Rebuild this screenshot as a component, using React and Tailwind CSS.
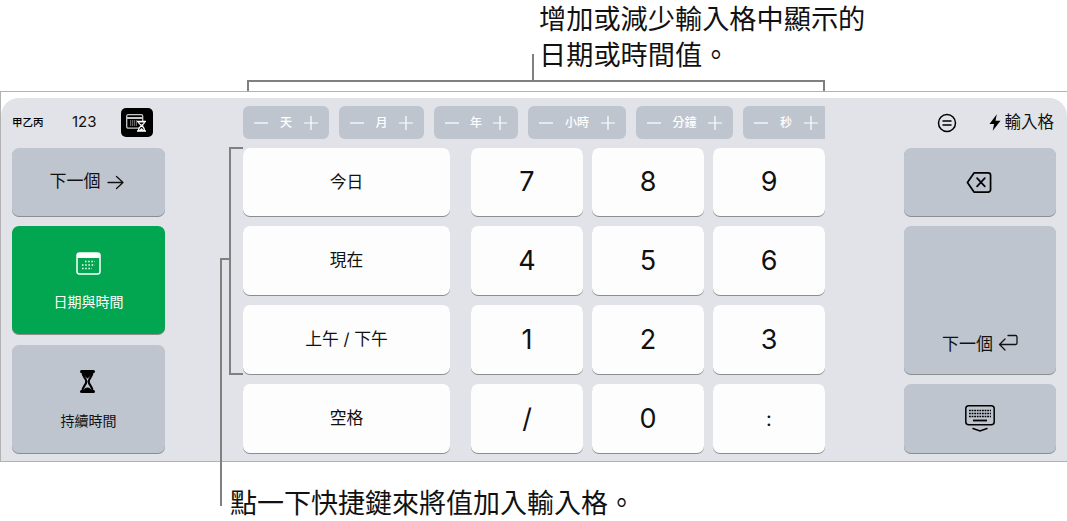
import React from 'react';

const font = { fontFamily: '"Inter", "Noto Sans CJK TC", sans-serif' };

const grayKey = 'flex items-center justify-center rounded-[7px] bg-[#bfc5cf] shadow-[0_1px_0_#8b8d91] text-[#111]';
const whiteKey = 'flex items-center justify-center rounded-[7px] bg-[#fdfdfe] shadow-[0_1px_0_#8b8d91] text-[#111]';

const stepperKeys = [
    { label: '天', width: 'w-[86px]' },
    { label: '月', width: 'w-[85px]' },
    { label: '年', width: 'w-[84px]' },
    { label: '小時', width: 'w-[98px]' },
    { label: '分鐘', width: 'w-[97px]' },
    { label: '秒', width: 'w-[86px]' },
];

const shortcuts = ['今日', '現在', '上午 / 下午', '空格'];
const digits = ['7', '8', '9', '4', '5', '6', '1', '2', '3', '/', '0', ':'];

const Stepper = ({ label, width }) => (
    <div className={`${width} shrink-0 h-[33px] rounded-[6px] bg-[#bfc5cf] flex items-center justify-between px-[11px] text-white`}>
        <svg width="14" height="14" viewBox="0 0 14 14"><path d="M0 7h14" stroke="#fff" strokeWidth="1.200" /></svg>
        <span className="text-[12px] font-medium leading-none">{label}</span>
        <svg width="14" height="14" viewBox="0 0 14 14"><path d="M0 7h14M7 0v14" stroke="#fff" strokeWidth="1.200" /></svg>
    </div>
);

const ModeIcon = () => (
    <svg width="22" height="18" viewBox="0 0 22 18" fill="none">
        <rect x="0.700" y="0.700" width="16" height="13.500" rx="1.500" stroke="#c9c9c9" strokeWidth="1.300" />
        <path d="M1 4h15.500" stroke="#c9c9c9" strokeWidth="2" />
        <path d="M4 7h7M4 9h7M4 11h7" stroke="#c9c9c9" strokeWidth="1.200" strokeDasharray="1.200 0.800" />
        <path d="M11 7.500h9M11 17h9" stroke="#fff" strokeWidth="1.600" />
        <path d="M12.500 8c0 3 6 3.500 6 8.500h-6c0-5 6-5.500 6-8.500z" fill="#000" stroke="#fff" strokeWidth="1.200" />
        <path d="M13.500 16l2-2 2 2z" fill="#fff" />
    </svg>
);

const CalendarIcon = () => (
    <svg width="25" height="23" viewBox="0 0 25 23" fill="none">
        <rect x="1" y="1" width="23" height="21" rx="2.500" stroke="#fff" strokeWidth="1.500" />
        <path d="M1 3.500a2.500 2.500 0 0 1 2.500-2.500h18a2.500 2.500 0 0 1 2.500 2.500v2.500h-23z" fill="#fff" />
        <path d="M9 9.500h10M6 13h13M6 16.500h10" stroke="#fff" strokeWidth="1.500" strokeDasharray="1.500 1.700" />
    </svg>
);

const HourglassIcon = () => (
    <svg width="15" height="23" viewBox="0 0 15 23" fill="none" className="mr-[2px]">
        <path d="M1.500 1.500h12M1.500 21.500h12" stroke="#000" strokeWidth="3" strokeLinecap="round" />
        <path d="M2.500 2c0 5.500 3.800 6 3.800 9.500S2.500 16 2.500 21h10c0-5-3.800-6-3.800-9.500s3.800-4 3.800-9.500z" stroke="#000" strokeWidth="2.200" />
        <path d="M3 2h9c0 3-2 4.500-4.500 6.500C5 6.500 3 5 3 2zM3.500 21c0-2 2-3.500 4-3.500s4 1.500 4 3.500z" fill="#000" />
    </svg>
);

const ClearIcon = () => (
    <svg width="26" height="23" viewBox="0 0 27 23" fill="none" className="mr-[2px]">
        <path d="M8.500 1.500h14.500a2.500 2.500 0 0 1 2.500 2.500v15a2.500 2.500 0 0 1-2.500 2.500h-14.500l-7-10z" stroke="#000" strokeWidth="1.800" strokeLinejoin="round" />
        <path d="M11.500 7l8 8.500M19.500 7l-8 8.500" stroke="#000" strokeWidth="1.800" strokeLinecap="round" />
    </svg>
);

const KeyboardIcon = () => (
    <svg width="30" height="27" viewBox="0 0 30 27" fill="none">
        <rect x="0.800" y="0.800" width="28.400" height="19" rx="3" stroke="#000" strokeWidth="1.500" />
        <path d="M4 5.500h22M4 8.500h22M4 11.500h22" stroke="#000" strokeWidth="1.700" strokeDasharray="1.800 0.800" />
        <path d="M8 15.500h14" stroke="#000" strokeWidth="1.800" />
        <path d="M8 23.500l7 2.500 7-2.500" stroke="#000" strokeWidth="1.500" strokeLinecap="round" />
    </svg>
);

const App = () => {
    return (
        <div className="relative w-[1067px] h-[521px] overflow-hidden bg-white" style={font}>
            {/* Top caption */}
            <div className="h-[91px] pt-[2px] pl-[539px] text-[27.200px] leading-[36px] text-[#111]">
                <p>增加或減少輸入格中顯示的</p>
                <p>日期或時間值。</p>
            </div>

            {/* Keyboard */}
            <div className="h-[371px] border-y border-l border-[#b2b2b2] pt-[6px] bg-white">
                <div className="h-[363px] rounded-t-[18px] bg-[#e1e3e8] flex flex-col pl-[11px] pr-[11px]">
                    {/* Toolbar */}
                    <div className="h-[50px] flex items-center pb-[1px] shrink-0">
                        <div className="w-[231px] flex items-center shrink-0">
                            <span className="text-[10.500px] font-medium w-[60px] text-black">甲乙丙</span>
                            <span className="text-[15px] w-[49px] text-[#111]">123</span>
                            <div className="w-[32px] h-[29px] rounded-[5px] bg-black flex items-center justify-center">
                                <ModeIcon />
                            </div>
                        </div>
                        <div className="w-[582px] shrink-0 flex gap-[10px] overflow-hidden">
                            {stepperKeys.map((k) => (
                                <Stepper key={k.label} label={k.label} width={k.width} />
                            ))}
                        </div>
                        <div className="flex-1 flex items-center justify-end">
                            <svg width="20" height="20" viewBox="0 0 20 20" fill="none" className="mr-[32px]">
                                <circle cx="10" cy="10" r="8.500" stroke="#000" strokeWidth="1.500" />
                                <path d="M6 8h8M6 12h8" stroke="#000" strokeWidth="1.500" strokeLinecap="round" />
                            </svg>
                            <svg width="12" height="17" viewBox="0 0 13 18" className="mr-[4px]">
                                <path d="M8.500 0L0.500 10.500h5L4 18l8.500-11h-5.500z" fill="#000" />
                            </svg>
                            <span className="text-[16.500px] mr-[2px] text-[#111]">輸入格</span>
                        </div>
                    </div>

                    {/* Keys */}
                    <div className="flex items-start">
                        <div className="w-[153px] shrink-0 flex flex-col gap-[10px] mr-[78px]">
                            <div className={`${grayKey} h-[68px] text-[17px] gap-[6px] pr-[4px]`}>
                                <span>下一個</span>
                                <svg width="17" height="15" viewBox="0 0 17 15" fill="none">
                                    <path d="M1 7.500h15M9.500 1.500l6.500 6-6.500 6" stroke="#111" strokeWidth="1.300" strokeLinecap="round" strokeLinejoin="round" />
                                </svg>
                            </div>
                            <div className="h-[108px] rounded-[7px] bg-[#02a650] shadow-[0_1px_0_#8b8d91] flex flex-col items-center pt-[26px] text-white">
                                <CalendarIcon />
                                <span className="text-[14px] mt-[17px] leading-[20px]">日期與時間</span>
                            </div>
                            <div className={`${grayKey} h-[108px] mt-[1px] flex-col !justify-start pt-[25px]`}>
                                <HourglassIcon />
                                <span className="text-[14px] mt-[18px] leading-[20px]">持續時間</span>
                            </div>
                        </div>

                        <div className="w-[207px] shrink-0 grid grid-rows-[68px_69px_69px_69px] gap-[10px] mr-[21px]">
                            {shortcuts.map((s) => (
                                <div key={s} className={`${whiteKey} text-[16.800px] pt-[1px]`}>{s}</div>
                            ))}
                        </div>

                        <div className="w-[354px] shrink-0 grid grid-cols-3 grid-rows-[68px_69px_69px_69px] gap-x-[9px] gap-y-[10px] mr-[79px]">
                            {digits.map((d) => (
                                <div key={d} className={`${whiteKey} text-[27px] pt-[1px] ${d === ':' ? '!text-[20px]' : ''}`}>{d}</div>
                            ))}
                        </div>

                        <div className="w-[152px] shrink-0 flex flex-col gap-[10px]">
                            <div className={`${grayKey} h-[68px]`}>
                                <ClearIcon />
                            </div>
                            <div className={`${grayKey} h-[148px] !items-end pb-[17px] text-[17px] gap-[5px]`}>
                                <span>下一個</span>
                                <svg width="20" height="17" viewBox="0 0 20 17" fill="none" className="mb-[6px]">
                                    <path d="M10 1.500h7.500a1.500 1.500 0 0 1 1.500 1.500v6a1.500 1.500 0 0 1-1.500 1.500H2M7 5l-5.500 5.500 5.500 5.500" stroke="#111" strokeWidth="1.300" strokeLinecap="round" strokeLinejoin="round" />
                                </svg>
                            </div>
                            <div className={`${grayKey} h-[69px]`}>
                                <KeyboardIcon />
                            </div>
                        </div>
                    </div>
                </div>
            </div>

            {/* Bottom caption */}
            <p className="pl-[230px] pt-[24px] text-[27px] leading-[36px] text-[#111]">點一下快捷鍵來將值加入輸入格。</p>

            {/* Callout lines */}
            <div className="absolute left-[532px] top-[54px] w-[2px] h-[27px] bg-[#808080]" />
            <div className="absolute left-[247px] top-[80px] w-[578px] h-[11px] border-x-2 border-t-2 border-[#808080]" />
            <div className="absolute left-[229px] top-[147px] w-[14px] h-[228px] border-l-2 border-y-2 border-[#808080]" />
            <div className="absolute left-[220px] top-[258px] w-[10px] h-[248px] border-l-2 border-t-2 border-[#808080]" />
        </div>
    );
};

export default App;
